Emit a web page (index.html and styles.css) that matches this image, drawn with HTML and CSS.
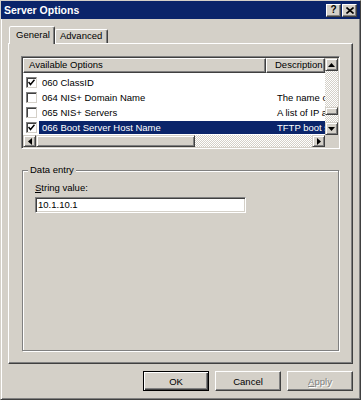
FILE: index.html
```html
<!DOCTYPE html>
<html lang="en">
  <head>
    <meta charset="UTF-8" />
    <title>Server Options</title>
    <link rel="stylesheet" href="styles.css">
  </head>
  <body>
    <div class="dialog">
      <div class="titlebar">
        <span class="title">Server Options</span>
        <span class="title-btn help">?</span>
        <span class="title-btn">
          <svg width="8" height="7" viewBox="0 0 8 7"><path d="M0.5 0.5 L7.5 6.5 M7.5 0.5 L0.5 6.5" stroke="#000" stroke-width="1.6"/></svg>
        </span>
      </div>

      <div class="tabs">
        <div class="tab active">General</div>
        <div class="tab">Advanced</div>
      </div>

      <div class="panel">
        <!-- lista -->
        <div class="listview">
          <div class="list-main">
            <div class="list-head">
              <div class="col-head col-name">Available Options</div>
              <div class="col-head col-desc">Description</div>
            </div>
            <div class="list-rows">
              <div class="row">
                <span class="check"><svg width="7" height="7" viewBox="0 0 7 7"><path d="M0.5 3 L2.5 5.5 L6.5 0.8" stroke="#000" stroke-width="1.5" fill="none"/></svg></span>
                <span class="cell name">060 ClassID</span>
                <span class="cell desc"></span>
              </div>
              <div class="row">
                <span class="check"></span>
                <span class="cell name">064 NIS+ Domain Name</span>
                <span class="cell desc">The name of the NIS+ domain</span>
              </div>
              <div class="row">
                <span class="check"></span>
                <span class="cell name">065 NIS+ Servers</span>
                <span class="cell desc">A list of IP addresses</span>
              </div>
              <div class="row selected">
                <span class="check"><svg width="7" height="7" viewBox="0 0 7 7"><path d="M0.5 3 L2.5 5.5 L6.5 0.8" stroke="#000" stroke-width="1.5" fill="none"/></svg></span>
                <span class="cell name">066 Boot Server Host Name</span>
                <span class="cell desc">TFTP boot server host name</span>
              </div>
            </div>
          </div>

          <div class="vscroll">
            <span class="sbtn"><svg width="7" height="4" viewBox="0 0 7 4"><polygon points="0,4 7,4 3.5,0" fill="#000"/></svg></span>
            <div class="vtrack"><span class="vthumb"></span></div>
            <span class="sbtn"><svg width="7" height="4" viewBox="0 0 7 4"><polygon points="0,0 7,0 3.5,4" fill="#000"/></svg></span>
          </div>

          <div class="hscroll">
            <span class="sbtn"><svg width="4" height="7" viewBox="0 0 4 7"><polygon points="4,0 4,7 0,3.5" fill="#000"/></svg></span>
            <span class="hthumb"></span>
            <span class="htrack"></span>
            <span class="sbtn"><svg width="4" height="7" viewBox="0 0 4 7"><polygon points="0,0 0,7 4,3.5" fill="#000"/></svg></span>
          </div>
          <div class="corner"></div>
        </div>

        <fieldset class="group">
          <legend>Data entry</legend>
          <label class="field-label" for="value"><u>S</u>tring value:</label>
          <div class="textbox" id="value">10.1.10.1</div>
        </fieldset>
      </div>

      <div class="buttons">
        <span class="btn default">OK</span>
        <span class="btn">Cancel</span>
        <span class="btn disabled"><u>A</u>pply</span>
      </div>
    </div>
  </body>
</html>
```

FILE: styles.css
```css
body {
  margin: 0;
  font-family: "Liberation Sans", Arial, sans-serif;
  font-size: 9.5px;
  color: #000;
  background: #d4d0c8;
}

/* okno dialogu */
.dialog {
  width: 361px;
  height: 400px;
  box-sizing: border-box;
  background: #d4d0c8;
  border: 1px solid;
  border-color: #d4d0c8 #404040 #404040 #d4d0c8;
  box-shadow: inset 1px 1px #fff, inset -1px -1px #808080;
  display: flex;
  flex-direction: column;
}

.titlebar {
  height: 18px;
  background: #0a246a;
  display: flex;
  align-items: center;
  padding: 0 3px 0 3px;
  gap: 1px;
}

.title {
  flex: 1;
  color: #fff;
  font-weight: bold;
  font-size: 10.5px;
}

.title-btn {
  width: 15px;
  height: 13px;
  box-sizing: border-box;
  background: #d4d0c8;
  border: 1px solid;
  border-color: #fff #404040 #404040 #fff;
  box-shadow: inset -1px -1px #808080;
  display: flex;
  align-items: center;
  justify-content: center;
}

.help {
  font-weight: bold;
  font-size: 10px;
  line-height: 1;
}

/* zakładki */
.tabs {
  display: flex;
  align-items: flex-end;
  height: 17px;
  margin: 7px 0 0 8px;
}

.tab {
  box-sizing: border-box;
  height: 14px;
  padding: 0 5px;
  border: 1px solid;
  border-bottom: none;
  border-color: #fff #404040 transparent #fff;
  border-radius: 2px 2px 0 0;
  box-shadow: inset -1px 0 #808080;
  line-height: 12px;
}

.tab:nth-child(2) {
  width: 53px;
  padding-left: 4px;
}

.tab.active {
  width: 46px;
  height: 18px;
  margin-bottom: -1px;
  padding-left: 6px;
  line-height: 15px;
  position: relative;
  z-index: 1;
  background: #d4d0c8;
}

.panel {
  height: 321px;
  box-sizing: border-box;
  margin: 0 7px;
  padding: 12px;
  border: 1px solid;
  border-color: #fff #404040 #404040 #fff;
  box-shadow: inset -1px -1px #808080;
  display: flex;
  flex-direction: column;
}

/* lista opcji */
.listview {
  height: 93px;
  box-sizing: border-box;
  border: 1px solid;
  border-color: #808080 #fff #fff #808080;
  box-shadow: inset 1px 1px #404040, inset -1px -1px #d4d0c8;
  padding: 1px;
  background: #fff;
  display: grid;
  grid-template-columns: 1fr 13px;
  grid-template-rows: 77px 12px;
}

.list-main {
  overflow: hidden;
}

.list-head {
  display: flex;
  height: 15px;
}

.col-head {
  box-sizing: border-box;
  height: 15px;
  background: #d4d0c8;
  border: 1px solid;
  border-color: #fff #404040 #404040 #fff;
  box-shadow: inset -1px -1px #808080;
  line-height: 12px;
  white-space: nowrap;
  overflow: hidden;
}

.col-name {
  width: 243px;
  padding-left: 5px;
}

.col-desc {
  flex: 1;
  padding-left: 8px;
}

.list-rows {
  padding-top: 2px;
}

.row {
  display: flex;
  align-items: center;
  height: 15px;
}

.check {
  width: 11px;
  height: 11px;
  box-sizing: border-box;
  margin: 0 2px 0 3px;
  background: #fff;
  border: 1px solid;
  border-color: #808080 #d4d0c8 #d4d0c8 #808080;
  box-shadow: inset 1px 1px #404040;
  display: flex;
  align-items: center;
  justify-content: center;
}

.cell {
  height: 13px;
  line-height: 13px;
  white-space: nowrap;
  overflow: hidden;
}

.name {
  width: 227px;
  padding-left: 3px;
}

.desc {
  flex: 1;
  padding-left: 8px;
}

.selected .cell {
  background: #0a246a;
  color: #fff;
}

/* paski przewijania */
.sbtn {
  width: 13px;
  height: 13px;
  box-sizing: border-box;
  background: #d4d0c8;
  border: 1px solid;
  border-color: #d4d0c8 #404040 #404040 #d4d0c8;
  box-shadow: inset 1px 1px #fff, inset -1px -1px #808080;
  display: flex;
  align-items: center;
  justify-content: center;
  flex: none;
}

.vscroll {
  display: flex;
  flex-direction: column;
}

.vtrack {
  flex: 1;
  padding-top: 36px;
  background: repeating-conic-gradient(#d4d0c8 0 25%, #fff 0 50%) 0 0 / 2px 2px;
}

.vthumb,
.hthumb {
  display: block;
  box-sizing: border-box;
  background: #d4d0c8;
  border: 1px solid;
  border-color: #d4d0c8 #404040 #404040 #d4d0c8;
  box-shadow: inset 1px 1px #fff, inset -1px -1px #808080;
}

.vthumb {
  height: 8px;
}

.hscroll {
  display: flex;
  height: 12px;
}

.hscroll .sbtn {
  height: 12px;
}

.hthumb {
  width: 159px;
  height: 12px;
}

.htrack {
  flex: 1;
  background: repeating-conic-gradient(#d4d0c8 0 25%, #fff 0 50%) 0 0 / 2px 2px;
}

.corner {
  background: #d4d0c8;
}

/* ramka grupy */
.group {
  flex: 1;
  min-height: 0;
  margin: 15px 1px 0 1px;
  padding: 0 12px;
  border: 1px solid #808080;
  box-shadow: inset 1px 1px #fff, 1px 1px #fff;
}

.group legend {
  margin-left: -7px;
  padding: 0 2px;
  line-height: 12px;
  background: #d4d0c8;
  position: relative;
}

.field-label {
  display: block;
  margin-top: 6px;
  line-height: 12px;
}

.textbox {
  width: 211px;
  height: 16px;
  box-sizing: border-box;
  margin-top: 3px;
  padding-left: 2px;
  background: #fff;
  border: 1px solid;
  border-color: #808080 #fff #fff #808080;
  box-shadow: inset 1px 1px #404040, inset -1px -1px #d4d0c8;
  line-height: 13px;
}

/* przyciski */
.buttons {
  display: flex;
  justify-content: flex-end;
  gap: 6px;
  margin: 7px 7px 0 0;
}

.btn {
  width: 66px;
  height: 20px;
  box-sizing: border-box;
  border: 1px solid;
  border-color: #fff #404040 #404040 #fff;
  box-shadow: inset -1px -1px #808080;
  display: flex;
  align-items: center;
  justify-content: center;
}

.btn.default {
  border-color: #000;
  box-shadow: inset 1px 1px #fff, inset -1px -1px #404040, inset -2px -2px #808080;
}

.btn.disabled {
  color: #808080;
  text-shadow: 1px 1px #fff;
}
```
